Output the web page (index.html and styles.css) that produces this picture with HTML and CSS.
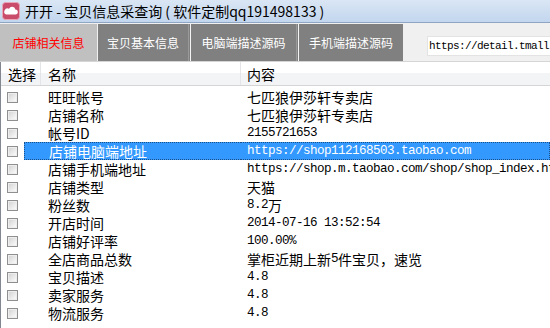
FILE: index.html
```html
<!DOCTYPE html>
<html lang="zh-CN">
<head>
    <meta charset="UTF-8">
    <title>开开 - 宝贝信息采查询</title>
    <link rel="stylesheet" href="styles.css">
</head>
<body>
    <div class="titlebar">
        <svg class="app-icon" width="18" height="18" viewBox="0 0 18 18">
            <rect x="0.5" y="0.5" width="17" height="17" rx="3" fill="#c94c6a" stroke="#e8a6b6"/>
            <path d="M4 12.5 h10 a2.6 2.6 0 0 0 -0.6 -5.1 a3.4 3.4 0 0 0 -6.4 -0.6 a2.9 2.9 0 0 0 -3 5.7 z" fill="#fff"/>
        </svg>
        <span class="title">开开 - 宝贝信息采查询 ( 软件定制qq191498133 )</span>
    </div>

    <div class="tabbar">
        <div class="tab active">店铺相关信息</div>
        <div class="tab w90">宝贝基本信息</div>
        <div class="sep"></div>
        <div class="tab w105">电脑端描述源码</div>
        <div class="sep"></div>
        <div class="tab w104">手机端描述源码</div>
        <div class="url-box">https://detail.tmall.com/item.htm</div>
    </div>

    <div class="list">
        <div class="row head">
            <div class="c-check">选择</div>
            <div class="c-name">名称</div>
            <div class="c-value">内容</div>
        </div>
        <div class="rows" id="rows"></div>
    </div>

    <script>
        // 店铺信息数据
        const shopInfo = [
            ["旺旺帐号", "七匹狼伊莎轩专卖店"],
            ["店铺名称", "七匹狼伊莎轩专卖店"],
            ["帐号ID", "2155721653"],
            ["店铺电脑端地址", "https://shop112168503.taobao.com"],
            ["店铺手机端地址", "https://shop.m.taobao.com/shop/shop_index.htm?shop_id=112168503"],
            ["店铺类型", "天猫"],
            ["粉丝数", "8.2万"],
            ["开店时间", "2014-07-16 13:52:54"],
            ["店铺好评率", "100.00%"],
            ["全店商品总数", "掌柜近期上新5件宝贝，速览"],
            ["宝贝描述", "4.8"],
            ["卖家服务", "4.8"],
            ["物流服务", "4.8"]
        ];
        const selected = 3;

        // 中文和英文数字分开显示（英文用等宽字体）
        function fillText(el, text) {
            text.split(/([\u4e00-\u9fff\uff0c]+)/).forEach(function (part) {
                if (!part) return;
                const span = document.createElement("span");
                span.className = /[\u4e00-\u9fff\uff0c]/.test(part) ? "cjk" : "mono";
                span.textContent = part;
                el.appendChild(span);
            });
        }

        const box = document.getElementById("rows");
        shopInfo.forEach(function (item, i) {
            const row = document.createElement("div");
            row.className = "row" + (i === selected ? " selected" : "");
            row.innerHTML =
                '<div class="c-check"><span class="checkbox"></span></div>' +
                '<div class="c-name"></div>' +
                '<div class="c-value"></div>';
            fillText(row.querySelector(".c-name"), item[0]);
            fillText(row.querySelector(".c-value"), item[1]);
            box.appendChild(row);
        });
    </script>
</body>
</html>
```

FILE: styles.css
```css
body {
    margin: 0;
    width: 550px;
    height: 328px;
    overflow: hidden;
    background: #fff;
    font-family: "Noto Sans CJK SC", "Noto Sans", sans-serif;
    color: #000;
}

.titlebar {
    height: 23px;
    display: flex;
    align-items: center;
    gap: 5px;
    padding-left: 2px;
    background: linear-gradient(#dae6f4, #c2d6ee);
    border-bottom: 1px solid #8ea6c4;
    box-sizing: border-box;
}

.app-icon {
    flex: none;
}

.title {
    font-size: 14px;
    line-height: 18px;
    white-space: nowrap;
}

.tabbar {
    height: 39px;
    display: flex;
    align-items: stretch;
    background: #f0f0f0;
    border-bottom: 1px solid #d5d5d5;
    box-sizing: border-box;
    padding-top: 1px;
}

.tab {
    display: flex;
    align-items: center;
    justify-content: center;
    background: #808080;
    color: #fff;
    font-size: 12px;
    white-space: nowrap;
}

.tab.active {
    width: 97px;
    background: #c0c0c0;
    color: #ff0000;
    margin-right: 1px;
}

.w90 { width: 90px; }
.w105 { width: 105px; }
.w104 { width: 104px; }

.sep {
    width: 3px;
    background: #808080;
    border-left: 1px solid #9a9a9a;
    border-right: 1px solid #f4f4f4;
    box-sizing: border-box;
}

.url-box {
    margin: 12px 0 5px 24px;
    flex: 1;
    min-width: 0;
    background: #fff;
    border: 1px solid #e3e3e3;
    border-right: none;
    font-family: "Liberation Mono", monospace;
    font-size: 11px;
    letter-spacing: -0.6px;
    line-height: 19px;
    padding-left: 1px;
    white-space: nowrap;
    overflow: hidden;
}

.list {
    border-left: 1px solid #828790;
    height: 266px;
    box-sizing: border-box;
}

.row {
    display: flex;
    height: 18px;
    align-items: center;
    line-height: 18px;
}

.row.head {
    height: 24px;
    margin-bottom: 2px;
    background: linear-gradient(#ffffff 50%, #f3f4f6 50%);
    border-bottom: 1px solid #d5d5d5;
    box-sizing: border-box;
}

.head .c-check,
.head .c-name {
    border-right: 1px solid #e3e5e9;
}

.c-check {
    width: 40px;
    height: 100%;
    display: flex;
    align-items: center;
    padding-left: 6px;
    box-sizing: border-box;
    font-size: 14px;
}

.head .c-check {
    padding-left: 7px;
}

.c-name {
    width: 200px;
    height: 100%;
    display: flex;
    align-items: center;
    padding-left: 7px;
    box-sizing: border-box;
    font-size: 14px;
    white-space: nowrap;
}

.c-value {
    flex: 1;
    min-width: 0;
    height: 100%;
    display: flex;
    align-items: center;
    padding-left: 6px;
    font-size: 14px;
    white-space: nowrap;
    overflow: hidden;
}

.cjk {
    font-family: "Noto Sans CJK SC", sans-serif;
    font-size: 14px;
}

.mono {
    font-family: "Liberation Mono", monospace;
    font-size: 12.6px;
    letter-spacing: -0.56px;
}

.c-name .mono {
    font-family: "Noto Sans CJK SC", sans-serif;
    font-size: 14px;
    letter-spacing: 0;
}

.checkbox {
    width: 11px;
    height: 11px;
    border: 1px solid #8f8f8f;
    box-sizing: border-box;
    background: linear-gradient(135deg, #d0d0d0, #ffffff);
    box-shadow: inset 0 0 0 1px #eeeeee;
}

.row.selected .c-name,
.row.selected .c-value {
    background: #3399ff;
    color: #fff;
}

.row.selected .c-name {
    margin-left: -17px;
    width: 217px;
    padding-left: 24px;
    border: 1px dotted #1c4f8a;
    border-right: none;
}

.row.selected .c-value {
    border: 1px dotted #1c4f8a;
    border-left: none;
    box-sizing: border-box;
}
```
